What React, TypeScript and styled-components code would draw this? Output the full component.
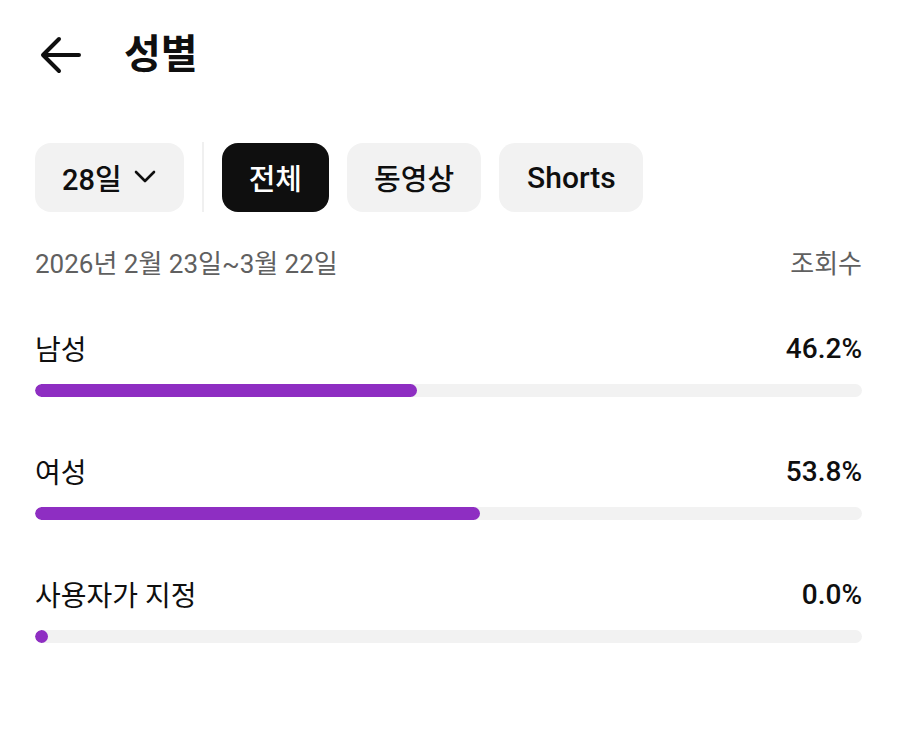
import React from "react";
import styled, { createGlobalStyle } from "styled-components";

const Global = createGlobalStyle`
  html, body { margin: 0; padding: 0; background: #fff; }
  body { font-family: "Roboto", "Noto Sans CJK KR", sans-serif; color: #0f0f0f; }
`;

const Page = styled.div`
  width: 898px;
  height: 750px;
  box-sizing: border-box;
  padding: 0 36px 0 35px;
  display: flex;
  flex-direction: column;
`;

const Header = styled.header`
  display: flex;
  align-items: center;
  height: 110px;
  gap: 41px;
  padding-left: 4px;
`;

const BackButton = styled.button`
  border: 0;
  background: none;
  padding: 0;
  width: 44px;
  height: 44px;
  display: flex;
  align-items: center;
  justify-content: center;
  color: #0f0f0f;
`;

const Title = styled.h1`
  margin: 0;
  font-size: 40px;
  font-weight: 700;
  line-height: 1;
  margin-top: -1px;
`;

const ChipRow = styled.div`
  display: flex;
  align-items: center;
  margin-top: 32px;
  gap: 18px;
`;

const Chip = styled.button<{ $active?: boolean }>`
  height: 69px;
  border: 0;
  border-radius: 16px;
  padding: 0 27px;
  display: flex;
  align-items: center;
  gap: 11px;
  font-family: "Roboto", "Noto Sans CJK KR", sans-serif;
  font-size: 29px;
  font-weight: 500;
  background: ${(p) => (p.$active ? "#0f0f0f" : "#f2f2f2")};
  color: ${(p) => (p.$active ? "#ffffff" : "#0f0f0f")};
`;

const WideChip = styled(Chip)`
  padding: 0 27px 0 28px;
  font-size: 30px;
`;

const Divider = styled.div`
  width: 2px;
  height: 70px;
  background: #f0f0f0;
`;

const MetaRow = styled.div`
  display: flex;
  justify-content: space-between;
  align-items: center;
  margin-top: 29px;
  font-size: 26px;
  color: #606060;
  height: 40px;
`;

const List = styled.div`
  display: flex;
  flex-direction: column;
  margin-top: 49px;
  gap: 56px;
`;

const Item = styled.div`
  display: flex;
  flex-direction: column;
  gap: 18px;
`;

const ItemHead = styled.div`
  display: flex;
  justify-content: space-between;
  align-items: center;
  height: 36px;
`;

const Label = styled.span`
  font-size: 28px;
  font-weight: 400;
`;

const Value = styled.span`
  font-size: 28px;
  font-weight: 500;
`;

const Track = styled.div`
  height: 13px;
  border-radius: 7px;
  background: #f2f2f2;
  overflow: hidden;
`;

const Fill = styled.div`
  height: 100%;
  min-width: 13px;
  border-radius: 7px;
  background: #8e2ec2;
`;

const rows = [
  { label: "남성", value: 46.2 },
  { label: "여성", value: 53.8 },
  { label: "사용자가 지정", value: 0.0 },
];

export default function App() {
  return (
    <>
      <Global />
      <Page>
        <Header>
          <BackButton aria-label="뒤로">
            <svg width="44" height="44" viewBox="0 0 44 44" fill="none">
              <path
                d="M40 22H5M20 6L4 22l16 16"
                stroke="#0f0f0f"
                strokeWidth="4"
                strokeLinecap="round"
                strokeLinejoin="round"
              />
            </svg>
          </BackButton>
          <Title>성별</Title>
        </Header>
        <ChipRow>
          <Chip>
            28일
            <svg width="24" height="24" viewBox="0 0 24 24" fill="none">
              <path d="M3 7l9 9 9-9" stroke="#0f0f0f" strokeWidth="2.6" strokeLinecap="round" strokeLinejoin="round" />
            </svg>
          </Chip>
          <Divider />
          <Chip $active>전체</Chip>
          <Chip>동영상</Chip>
          <WideChip>Shorts</WideChip>
        </ChipRow>
        <MetaRow>
          <span>2026년 2월 23일~3월 22일</span>
          <span>조회수</span>
        </MetaRow>
        <List>
          {rows.map((r) => (
            <Item key={r.label}>
              <ItemHead>
                <Label>{r.label}</Label>
                <Value>{r.value.toFixed(1)}%</Value>
              </ItemHead>
              <Track>
                <Fill style={{ width: `${r.value}%` }} />
              </Track>
            </Item>
          ))}
        </List>
      </Page>
    </>
  );
}
